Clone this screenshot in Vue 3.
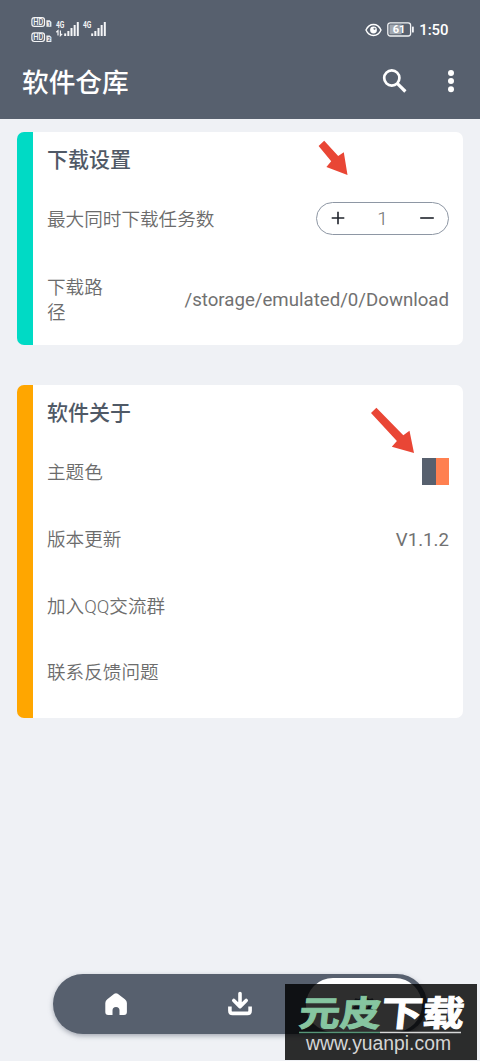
<script setup>
const aboutRows = [
  { label: '主题色', swatch: true },
  { label: '版本更新', value: 'V1.1.2' },
  { label: '加入QQ交流群' },
  { label: '联系反馈问题' },
]
const bars = [2.6, 5, 8, 11, 14]
</script>

<template>
  <div class="screen">
    <header class="header">
      <div class="status">
        <svg class="signals" width="80" height="30" viewBox="0 0 80 30">
          <g v-for="n in 2" :key="n" :transform="`translate(0 ${(n - 1) * 15.2})`">
            <rect x="1.9" y="2.7" width="12.6" height="8.6" rx="2.4" fill="none" stroke="#f4f5f7" stroke-width="1.2" />
            <text x="3.2" y="10.1" font-size="8.8" font-weight="500" textLength="10" lengthAdjust="spacingAndGlyphs">HD</text>
            <path d="M16.4 5.3h3.2l1.8 1.6v4.9h-5z" fill="#eceef1" />
            <text x="17.5" y="11" class="sim" font-size="5.5">{{ n }}</text>
          </g>
          <g v-for="g in 2" :key="'g' + g" :transform="`translate(${g === 1 ? 26 : 53} 0)`">
            <text x="0" y="13" font-size="8.5" font-weight="700" textLength="8.4" lengthAdjust="spacingAndGlyphs">4G</text>
            <rect v-for="(h, i) in bars" :key="i" :x="8.2 + i * 3.15" :y="21 - h" width="2" :height="h" fill="#f4f5f7" />
          </g>
          <path d="M26.3 17.2l1.7-1.6v5M30.4 15.6v5l1.8-1.7" fill="none" stroke="#f4f5f7" stroke-width="1.2" />
        </svg>
        <div class="status-right">
          <svg width="17" height="14" viewBox="0 0 17 14">
            <path d="M1 7C4.3-.4 12.7-.4 16 7 12.7 14.4 4.3 14.4 1 7z" fill="none" stroke="#fff" stroke-width="1.4" />
            <circle cx="8.5" cy="7" r="3.4" fill="#fff" />
            <circle cx="9.5" cy="5.8" r="1.1" fill="#78808b" />
          </svg>
          <svg class="battery" width="28" height="15" viewBox="0 0 28 15">
            <rect x=".8" y=".8" width="22.8" height="13.2" rx="2.5" fill="none" stroke="#f2f3f5" stroke-width="1.3" />
            <rect x="2.5" y="2.5" width="12" height="9.8" fill="#a1a7af" />
            <rect x="25" y="4.5" width="1.8" height="6" rx=".6" fill="#f2f3f5" />
            <text x="12" y="11.4" text-anchor="middle" font-size="11" font-weight="700">61</text>
          </svg>
          <span class="time">1:50</span>
        </div>
      </div>
      <div class="appbar">
        <h1>软件仓库</h1>
        <div class="actions">
          <svg width="26" height="26" viewBox="0 0 26 26" fill="none" stroke="#fff">
            <circle cx="9.8" cy="10" r="7.6" stroke-width="2.7" />
            <path d="M15.2 15.4l8.2 8.1" stroke-width="3.2" />
          </svg>
          <svg width="8" height="26" viewBox="0 0 8 26" fill="#fff">
            <circle cx="4" cy="5" r="3" /><circle cx="4" cy="13.1" r="3" /><circle cx="4" cy="21.2" r="3" />
          </svg>
        </div>
      </div>
    </header>

    <main>
      <section class="card teal">
        <h2>下载设置</h2>
        <div class="row">
          <span class="label">最大同时下载任务数</span>
          <div class="stepper">
            <svg width="14" height="14" viewBox="0 0 14 14"><path d="M.7 7h12.6M7 .7v12.6" stroke="#20242c" stroke-width="1.6" /></svg>
            <span class="count">1</span>
            <svg width="14" height="14" viewBox="0 0 14 14"><path d="M.2 7h13.6" stroke="#20242c" stroke-width="1.6" /></svg>
          </div>
        </div>
        <div class="row tall">
          <span class="label narrow">下载路径</span>
          <span class="path">/storage/emulated/0/Download</span>
        </div>
        <svg class="pointer first" width="32" height="38" viewBox="0 0 32 38">
          <path d="M6.2.7L.6 6 13.2 21.3l-4.8 5.6L29.5 35 25.8 12.3l-5.6 3.8z" fill="#e94635" />
        </svg>
      </section>

      <section class="card amber">
        <h2>软件关于</h2>
        <div v-for="row in aboutRows" :key="row.label" class="row">
          <span class="label">{{ row.label }}</span>
          <span v-if="row.swatch" class="swatch"></span>
          <span v-else-if="row.value" class="path">{{ row.value }}</span>
        </div>
        <svg class="pointer second" width="46" height="48" viewBox="0 0 46 48">
          <path d="M6.4.8L1 6.1 26.9 33.9l-5.1 5.9L44 46 39.5 23.8l-6.2 4.5z" fill="#e94635" />
        </svg>
      </section>
    </main>

    <nav class="nav">
      <div class="tab">
        <svg width="24" height="24" viewBox="0 0 24 24">
          <path d="M10.3 1.8a2.8 2.8 0 0 1 3.4 0l7.2 5.4q2 1.5 2 3.7v9.2q0 2.9-2.9 2.9h-4.5v-4.5a3.5 3.5 0 0 0-7 0V23H4.2q-2.9 0-2.9-2.9v-9.2q0-2.2 2-3.7z" fill="#fff" />
        </svg>
      </div>
      <div class="tab">
        <svg width="26" height="26" viewBox="0 0 26 26" fill="none" stroke="#fff" stroke-width="3.6" stroke-linecap="round" stroke-linejoin="round">
          <path d="M13 2.6v12.5M6.8 9.5l6.2 6.1 6.2-6.1" />
          <path d="M2.9 15.4v4.3q0 2.7 2.7 2.7h14.8q2.7 0 2.7-2.7v-4.3" stroke-linecap="butt" />
        </svg>
      </div>
      <div class="tab active">
        <svg width="24" height="24" viewBox="0 0 28 28">
          <path d="M11 2h6l1.1 3.7 2.2 1.2L24 6l3 5-2.7 2.9L27 17l-3 5-3.7-.9-2.2 1.2L17 26h-6l-1.1-3.7-2.2-1.2L4 22l-3-5 2.7-3.1L1 11l3-5 3.7.9 2.2-1.2z" fill="#56606e" />
          <circle cx="14" cy="14" r="5" fill="#fff" />
        </svg>
      </div>
    </nav>

    <svg class="watermark" width="192" height="76" viewBox="0 0 192 76">
      <rect width="192" height="76" fill="#000" fill-opacity=".82" />
      <g class="brand" transform="translate(15 41.5) skewX(-6)">
        <text x="-2" y="0" class="green" textLength="82" lengthAdjust="spacingAndGlyphs">元皮</text>
        <text x="80" y="0" class="white" textLength="83" lengthAdjust="spacingAndGlyphs">下载</text>
      </g>
      <path d="M14 48.5h81" stroke="#579577" stroke-width="1.5" />
      <path d="M95 48.5h81" stroke="#d8d8d8" stroke-width="1.5" />
      <text x="21" y="66" class="site" textLength="145" lengthAdjust="spacingAndGlyphs">www.yuanpi.com</text>
    </svg>
  </div>
</template>

<style>
body { margin: 0; background: #eff1f5; }
</style>

<style scoped>
* { box-sizing: border-box; }
.screen {
  position: relative;
  display: flex;
  flex-direction: column;
  width: 480px;
  height: 1061px;
  overflow: hidden;
  background: #eff1f5;
  color: #6e6e6e;
  font-family: Roboto, "Noto Sans CJK SC", sans-serif;
}
.header { height: 118.5px; background: #57606e; color: #fff; }
.status { display: flex; justify-content: space-between; height: 56px; padding: 15px 31.5px 0 30px; }
.signals text { fill: #f4f5f7; }
.signals .sim { fill: #57606e; font-weight: 700; }
.status-right { display: flex; align-items: center; height: 29px; }
.battery { margin-left: 5px; }
.battery text { fill: #fff; }
.time { margin-left: 4px; font-size: 14.9px; font-weight: 500; }
.appbar { display: flex; align-items: center; justify-content: space-between; height: 50px; padding: 0 25px 0 22px; }
h1 { margin: 4px 0 0; font-size: 26.7px; line-height: 40px; font-weight: 500; }
.actions { display: flex; align-items: center; gap: 39px; }
.actions svg { display: block; }
main { display: flex; flex-direction: column; gap: 40px; padding: 13.5px 17px 0; }
.card { position: relative; padding: 0 14px; border-left: 16px solid; border-radius: 7px; background: #fff; }
.teal { height: 213px; border-color: #00dac5; }
.amber { height: 333px; border-color: #ffa600; }
h2 { height: 54px; margin: 0; color: #505966; font-size: 21px; line-height: 56.5px; font-weight: 500; }
.row { display: flex; align-items: center; justify-content: space-between; height: 66.7px; font-size: 18.6px; line-height: 25px; }
.label { padding-top: 3px; color: #6c6c6c; font-weight: 350; }
.tall { height: 93px; }
.narrow { width: 60px; }
.path { padding-top: 2px; color: #717171; font-size: 18.65px; font-weight: 400; }
.stepper { display: flex; align-items: center; justify-content: space-between; width: 133px; height: 33px; margin-top: -2px; padding: 0 14px; border: 1.4px solid #8e97a4; border-radius: 17px; }
.stepper svg { display: block; }
.count { padding-top: 1px; font-weight: 300; font-size: 19px; }
.swatch { width: 27px; height: 27px; margin-top: -1px; background: linear-gradient(90deg, #57606e 50%, #ff8050 50%); }
.pointer { position: absolute; }
.first { left: 285px; top: 8px; }
.second { left: 337px; top: 22px; }
.nav { position: absolute; left: 53px; top: 974px; display: flex; width: 374px; height: 60px; padding: 0 1px; border-radius: 30px; background: #57606e; box-shadow: 0 2px 5px #636b7a88; }
.tab { display: flex; flex: 0 0 124px; align-items: center; justify-content: center; }
.active { flex-basis: 116px; margin: 4px 4px 2px; border-radius: 27px; background: #fff; }
.watermark { position: absolute; left: 285px; top: 984px; display: block; }
.brand text { font: 700 35px "Noto Sans CJK SC", sans-serif; stroke-width: 1; }
.brand .green { fill: #86c5a0; stroke: #86c5a0; }
.brand .white { fill: #fff; stroke: #fff; }
.site { fill: #d5d5d5; font: 20px "Liberation Sans", sans-serif; }
</style>
